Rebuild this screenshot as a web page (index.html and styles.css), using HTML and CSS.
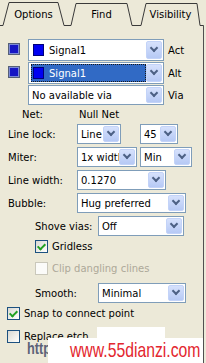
FILE: index.html
```
<!DOCTYPE html>
<html>
<head>
<meta charset="utf-8">
<link rel="stylesheet" href="styles.css">
</head>
<body>
<div class="tabstrip">
  <svg class="tablines" width="206" height="26" viewBox="0 0 206 26">
    <polyline points="0,25.5 3,25.5 9,2.5 58,2.5 64,25.5 71,25.5 76,3.5 127,3.5 132,25.5 141,25.5 146,3.5 197,3.5 200,25.5 203.5,25.5 203.5,26" fill="none" stroke="#3a3a3a" stroke-width="1"/>
  </svg>
  <div class="tablabels">
    <span class="tab tab-options">Options</span>
    <span class="tab tab-find">Find</span>
    <span class="tab tab-vis">Visibility</span>
  </div>
</div>
<div class="panel">
  <div class="row sig-row">
    <span class="swatch"></span>
    <div class="combo c-sig">
      <div class="val val-sig"><span class="chip"></span><span class="chip-txt">Signal1</span></div>
      <span class="btn"></span>
    </div>
    <span class="side">Act</span>
  </div>
  <div class="row sig-row">
    <span class="swatch"></span>
    <div class="combo c-sig">
      <div class="val"><div class="hl"><span class="chip"></span><span class="chip-txt">Signal1</span></div></div>
      <span class="btn"></span>
    </div>
    <span class="side">Alt</span>
  </div>
  <div class="row via-row">
    <div class="combo c-via"><div class="val">No available via</div><span class="btn"></span></div>
    <span class="side">Via</span>
  </div>
  <div class="row net-row">
    <span class="net-lbl">Net:</span><span>Null Net</span>
  </div>
  <div class="row field">
    <span class="lbl">Line lock:</span>
    <div class="combo c-line"><div class="val">Line</div><span class="btn"></span></div>
    <div class="combo c-45"><div class="val">45</div><span class="btn"></span></div>
  </div>
  <div class="row field">
    <span class="lbl">Miter:</span>
    <div class="combo c-1x"><div class="val">1x width</div><span class="btn"></span></div>
    <div class="combo c-min"><div class="val">Min</div><span class="btn"></span></div>
  </div>
  <div class="row field">
    <span class="lbl">Line width:</span>
    <div class="combo c-lw"><div class="val">0.1270</div><span class="btn"></span></div>
  </div>
  <div class="row field">
    <span class="lbl">Bubble:</span>
    <div class="combo c-bub"><div class="val">Hug preferred</div><span class="btn"></span></div>
  </div>
  <div class="row field">
    <span class="lbl lbl-in">Shove vias:</span>
    <div class="combo c-shove"><div class="val">Off</div><span class="btn"></span></div>
  </div>
  <div class="row check-row r-grid">
    <span class="cb checked cb-in"></span><span class="cb-txt">Gridless</span>
  </div>
  <div class="row check-row r-clip">
    <span class="cb disabled cb-in"></span><span class="cb-txt dis">Clip dangling clines</span>
  </div>
  <div class="row field r-smooth">
    <span class="lbl lbl-in">Smooth:</span>
    <div class="combo c-smooth"><div class="val">Minimal</div><span class="btn"></span></div>
  </div>
  <div class="row check-row r-snap">
    <span class="cb checked cb-out"></span><span class="cb-txt">Snap to connect point</span>
  </div>
  <div class="row check-row r-repl">
    <span class="cb cb-out"></span><span class="cb-txt">Replace etch</span>
  </div>
</div>
<div class="watermark">
  <span class="wm-http">http</span>
  <span class="wm-box1"></span>
  <span class="wm-box2"></span>
  <span class="wm-url">www.55dianzi.com</span>
</div>
</body>
</html>
```
FILE: styles.css
```
html, body {
  margin: 0;
  padding: 0;
}
body {
  width: 206px;
  height: 363px;
  overflow: hidden;
  position: relative;
  background: #ECE9D8;
  font-family: "DejaVu Sans", sans-serif;
  font-size: 10px;
  color: #000;
}

/* tabs */
.tabstrip {
  display: grid;
  height: 26px;
}
.tabstrip > * {
  grid-area: 1 / 1;
}
.tablines {
  display: block;
}
.tablabels {
  display: flex;
  height: 26px;
}
.tab {
  display: block;
  text-align: center;
  line-height: 13px;
  padding-top: 8px;
  white-space: nowrap;
}
.tab-options { margin-left: 3px; width: 61px; }
.tab-find { margin-left: 7px; width: 61px; }
.tab-vis { margin-left: 9px; width: 59px; }

/* panel */
.panel {
  box-sizing: border-box;
  width: 204px;
  height: 337px;
  border-right: 1px solid #505050;
  padding-top: 13px;
}
.row {
  display: flex;
  align-items: center;
  white-space: nowrap;
}
.sig-row { height: 22px; }
.sig-row + .sig-row { margin-top: 1px; }
.via-row { height: 20px; margin-top: 1px; padding-left: 28px; }
.net-row { height: 19px; }
.field { height: 20px; }
.field + .field { margin-top: 3px; }

.swatch {
  box-sizing: border-box;
  width: 12px;
  height: 12px;
  margin: 4px 8px 0 8px;
  align-self: flex-start;
  border: 1px solid #566078;
  background: #1616c4;
  box-shadow: inset 0 0 0 1px #7c8ad6;
}
.side { margin-left: 4px; }

/* combo boxes */
.combo {
  box-sizing: border-box;
  display: flex;
  height: 100%;
  border: 1px solid #7F9DB9;
  background: #fff;
  flex: none;
}
.combo .val {
  flex: 1;
  min-width: 0;
  overflow: hidden;
  display: flex;
  align-items: center;
  padding-left: 3px;
}
.combo .btn {
  box-sizing: border-box;
  flex: none;
  width: 16px;
  margin: 1px 1px 1px 0;
  border: 1px solid #C3D3F8;
  border-radius: 2px;
  background: linear-gradient(#d6e1fc, #b6c9f5);
  display: flex;
  align-items: center;
  justify-content: center;
}
.combo .btn::after {
  content: "";
  width: 4px;
  height: 4px;
  border-right: 2px solid #4D6185;
  border-bottom: 2px solid #4D6185;
  transform: translateY(-2px) rotate(45deg);
}
.c-sig { width: 136px; }
.c-sig .val { padding-left: 0; }
.val-sig { padding-left: 4px !important; }
.c-via { width: 136px; }
.chip {
  box-sizing: border-box;
  width: 11px;
  height: 12px;
  flex: none;
  background: #0000f2;
  border: 1px solid #00007a;
}
.chip-txt { margin-left: 5px; }
.hl {
  box-sizing: border-box;
  flex: 1;
  align-self: stretch;
  margin: 1px 0 1px 2px;
  display: flex;
  align-items: center;
  padding-left: 1px;
  background: #316AC5;
  border: 1px dotted #1a1a1a;
  color: #fff;
}

.net-lbl { margin-left: 22px; width: 57px; }
.lbl { margin-left: 8px; width: 69px; flex: none; }
.lbl-in { margin-left: 35px; width: 63px; }

.c-line { width: 44px; }
.c-45 { width: 38px; margin-left: 19px; }
.c-1x { width: 60px; }
.c-min { width: 52px; margin-left: 3px; }
.c-lw { width: 89px; }
.c-bub { width: 109px; }
.c-shove { width: 86px; }
.c-smooth { width: 88px; }

/* checkboxes */
.check-row { height: 13px; }
.r-grid { margin-top: 4px; }
.r-clip { margin-top: 9px; }
.r-smooth { margin-top: 8px; }
.r-snap { margin-top: 4px; }
.r-repl { margin-top: 10px; }
.cb {
  box-sizing: border-box;
  width: 13px;
  height: 13px;
  flex: none;
  border: 1px solid #1C5180;
  background: linear-gradient(135deg, #d8d8d2 0%, #f4f4f0 70%, #ffffff 100%);
  display: flex;
  align-items: center;
  justify-content: center;
}
.cb.checked::after {
  content: "";
  width: 3px;
  height: 6px;
  border-right: 2px solid #21A121;
  border-bottom: 2px solid #21A121;
  transform: translateY(-1px) rotate(45deg);
}
.cb.disabled {
  border-color: #CAC8BB;
  background: #fbfbf9;
}
.cb-in { margin-left: 35px; }
.cb-out { margin-left: 7px; }
.cb-txt { margin-left: 4px; }
.dis { color: #ACA899; }

/* watermark overlay */
.watermark {
  position: absolute;
  left: 0;
  top: 0;
  width: 206px;
  height: 363px;
  pointer-events: none;
}
.wm-box1 {
  position: absolute;
  left: 97px;
  top: 327px;
  width: 68px;
  height: 11px;
  background: #fff;
}
.wm-box2 {
  position: absolute;
  left: 48px;
  top: 338px;
  width: 155px;
  height: 25px;
  background: #fff;
}
.wm-http {
  position: absolute;
  left: 27px;
  top: 343px;
  font-family: "Liberation Sans", Arial, sans-serif;
  font-weight: bold;
  font-size: 17px;
  line-height: 12px;
  color: #5d6378;
  transform: scaleX(0.75);
  transform-origin: 0 0;
}
.wm-url {
  position: absolute;
  left: 70px;
  top: 343px;
  font-family: "Liberation Sans", Arial, sans-serif;
  font-size: 21px;
  line-height: 14px;
  color: #e3262e;
  transform: scaleX(0.75);
  transform-origin: 0 0;
  white-space: nowrap;
}
```
